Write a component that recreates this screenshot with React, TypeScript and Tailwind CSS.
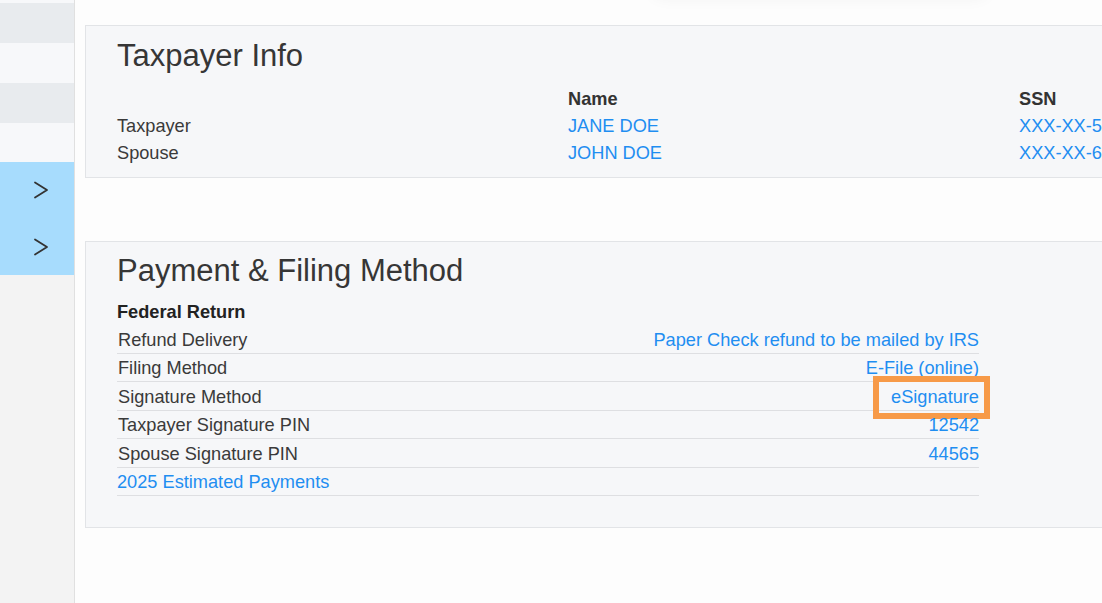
import React from "react";

const blue = "text-[#1f8ef1]";

function Chevron() {
    return (
        <svg width="16" height="20" viewBox="0 0 16 20" fill="none">
            <path d="M2 2.5 L14 10 L2 17.5" stroke="#333" strokeWidth="1.8" strokeLinecap="round" strokeLinejoin="round" />
        </svg>
    );
}

const filingRows = [
    { label: "Refund Delivery", value: "Paper Check refund to be mailed by IRS" },
    { label: "Filing Method", value: "E-File (online)" },
    { label: "Signature Method", value: "eSignature", highlight: true },
    { label: "Taxpayer Signature PIN", value: "12542" },
    { label: "Spouse Signature PIN", value: "44565" },
];

export default function App() {
    return (
        <div className="flex h-[603px] w-[1102px] overflow-hidden bg-[#fdfdfd] font-['Liberation_Sans',Arial,sans-serif] text-[#3a3a3a]">
            {/* Sidebar */}
            <aside className="flex w-[75px] shrink-0 flex-col border-r border-[#e0e0e0] bg-[#f3f3f3]">
                <div className="h-[3px] bg-[#f7f8fa]" />
                <div className="h-10 bg-[#e8ebee]" />
                <div className="h-10 bg-[#f7f8fa]" />
                <div className="h-10 bg-[#e8ebee]" />
                <div className="h-[39px] bg-[#f7f8fa]" />
                <div className="flex h-[56px] items-center bg-[#a7dcfd] pl-[33px]">
                    <Chevron />
                </div>
                <div className="flex h-[57px] items-center bg-[#a7dcfd] pl-[33px]">
                    <Chevron />
                </div>
            </aside>

            {/* Main */}
            <main className="relative flex-1 pl-[10px] pt-[25px]">
                <div className="absolute left-[575px] top-[-34px] h-[30px] w-[340px] rounded-full bg-[#fdfdfd] shadow-[0_2px_16px_rgba(0,0,0,0.05)]" />

                {/* Taxpayer Info */}
                <section className="w-[1060px] border border-[#e2e4e7] bg-[#f6f7f9] pb-[10.5px] pl-[31px] pt-[13px]">
                    <h2 className="text-[31px] leading-[33px] text-[#363636]">Taxpayer Info</h2>
                    <div className="mt-[13.5px] grid grid-cols-[451px_451px_1fr] text-[18.2px] leading-[27px]">
                        <div />
                        <div className="font-bold text-[#333]">Name</div>
                        <div className="font-bold text-[#333]">SSN</div>
                        <div>Taxpayer</div>
                        <div className={blue}>JANE DOE</div>
                        <div className={blue}>XXX-XX-5</div>
                        <div>Spouse</div>
                        <div className={blue}>JOHN DOE</div>
                        <div className={blue}>XXX-XX-6</div>
                    </div>
                </section>

                {/* Payment & Filing Method */}
                <section className="mt-[63px] w-[1060px] border border-[#e2e4e7] bg-[#f6f7f9] pb-[31px] pl-[31px] pt-[12px]">
                    <h2 className="text-[31px] leading-[33px] text-[#363636]">Payment &amp; Filing Method</h2>
                    <div className="mt-[12px] w-[862px] text-[18.2px]">
                        <div className="pt-px font-bold leading-[25px] text-[#222]">Federal Return</div>
                        {filingRows.map((row) => (
                            <div
                                key={row.label}
                                className="flex justify-between border-b border-[#dedfe2] pl-px pt-[1.5px] leading-[26px]"
                            >
                                <span>{row.label}</span>
                                <span className={`relative ${blue}`}>
                                    {row.value}
                                    {row.highlight && (
                                        <span className="absolute -bottom-[9.5px] -left-[18px] -right-[11px] -top-[7.5px] border-[6px] border-[#f79a48]" />
                                    )}
                                </span>
                            </div>
                        ))}
                        <div className={`border-b border-[#dedfe2] pt-[1.5px] leading-[26px] ${blue}`}>2025 Estimated Payments</div>
                    </div>
                </section>
            </main>
        </div>
    );
}
